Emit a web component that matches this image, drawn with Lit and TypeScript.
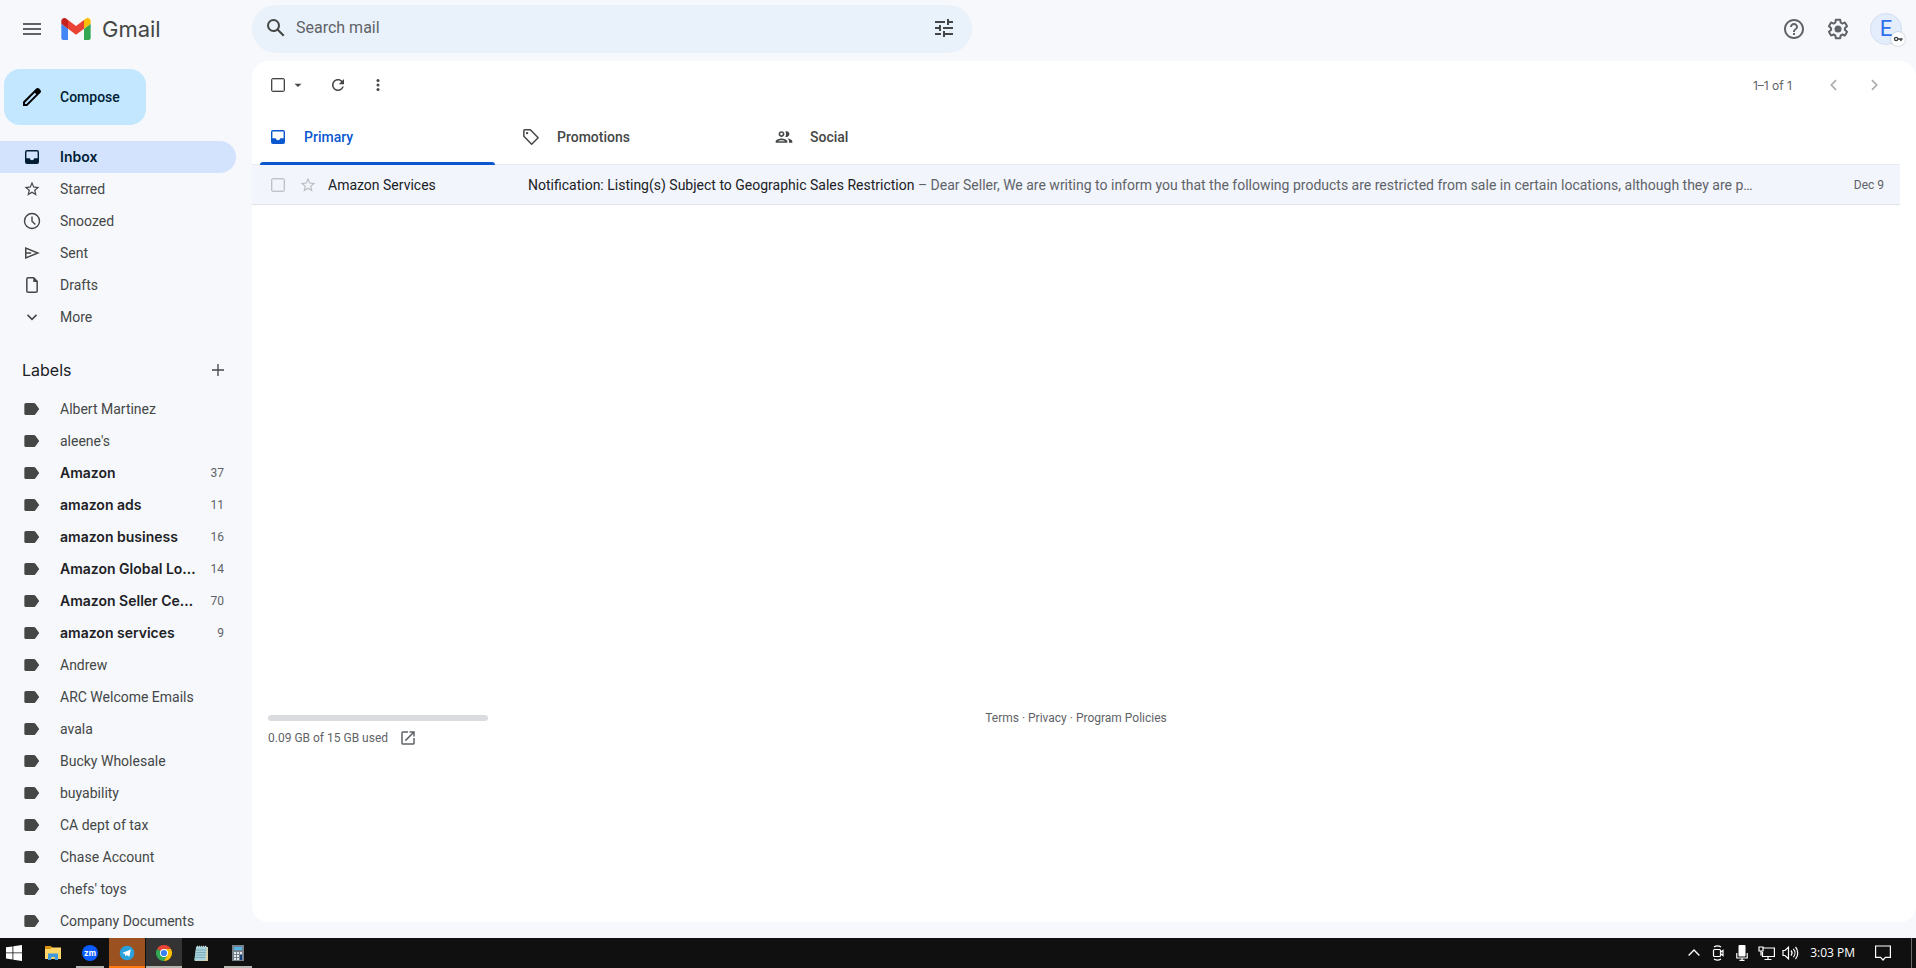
import { LitElement, html, css, svg, nothing } from "lit";
import { customElement, property } from "lit/decorators.js";
import { classMap } from "lit/directives/class-map.js";

const icons = {
  menu: svg`<path d="M3 18h18v-2H3v2zm0-5h18v-2H3v2zm0-7v2h18V6H3z"/>`,
  search: svg`<path d="M20.49 19l-5.73-5.73C15.53 12.2 16 10.91 16 9.5A6.5 6.5 0 1 0 9.5 16c1.41 0 2.7-.47 3.77-1.24L19 20.49 20.49 19zM5 9.5C5 7.01 7.01 5 9.5 5S14 7.01 14 9.5 11.99 14 9.5 14 5 11.99 5 9.5z"/>`,
  tune: svg`<path d="M3 17v2h6v-2H3zM3 5v2h10V5H3zm10 16v-2h8v-2h-8v-2h-2v6h2zM7 9v2H3v2h4v2h2V9H7zm14 4v-2H11v2h10zm-6-4h2V7h4V5h-4V3h-2v6z"/>`,
  help: svg`<path d="M11 18h2v-2h-2v2zm1-16C6.48 2 2 6.48 2 12s4.48 10 10 10 10-4.48 10-10S17.52 2 12 2zm0 18c-4.41 0-8-3.59-8-8s3.59-8 8-8 8 3.59 8 8-3.59 8-8 8zm0-14c-2.21 0-4 1.79-4 4h2c0-1.1.9-2 2-2s2 .9 2 2c0 2-3 1.75-3 5h2c0-2.25 3-2.5 3-5 0-2.21-1.79-4-4-4z"/>`,
  gear: svg`<path d="M13.85 22.25h-3.7c-.74 0-1.36-.54-1.45-1.27l-.27-1.89c-.27-.14-.53-.29-.79-.46l-1.8.72c-.7.26-1.47-.03-1.81-.65L2.2 15.53c-.35-.66-.2-1.44.36-1.88l1.53-1.19c-.01-.15-.02-.3-.02-.46 0-.15.01-.31.02-.46l-1.52-1.19c-.59-.45-.74-1.26-.37-1.88l1.85-3.19c.34-.62 1.11-.9 1.79-.63l1.81.73c.26-.17.52-.32.78-.46l.27-1.91c.09-.7.71-1.25 1.44-1.25h3.7c.74 0 1.36.54 1.45 1.27l.27 1.89c.27.14.53.29.79.46l1.8-.72c.71-.26 1.48.03 1.82.65l1.84 3.18c.36.66.2 1.44-.36 1.88l-1.52 1.19c.01.15.02.3.02.46s-.01.31-.02.46l1.52 1.19c.56.45.72 1.23.37 1.86l-1.86 3.22c-.34.62-1.11.9-1.8.63l-1.8-.72c-.26.17-.52.32-.78.46l-.27 1.91c-.1.68-.72 1.22-1.46 1.22zm-3.23-2h2.76l.37-2.55.53-.22c.44-.18.88-.44 1.34-.78l.45-.34 2.38.96 1.38-2.4-2.03-1.58.07-.56c.03-.26.06-.51.06-.78s-.03-.53-.06-.78l-.07-.56 2.03-1.58-1.39-2.4-2.39.96-.45-.35c-.42-.32-.87-.58-1.33-.77l-.52-.22-.37-2.55h-2.76l-.37 2.55-.53.21c-.44.19-.88.44-1.34.79l-.45.33-2.38-.95-1.39 2.39 2.03 1.58-.07.56a7 7 0 0 0-.06.79c0 .26.02.53.06.78l.07.56-2.03 1.58 1.38 2.4 2.39-.96.45.35c.43.33.86.58 1.33.77l.53.22.38 2.55z"/><circle cx="12" cy="12" r="3.5"/>`,
  pencil: svg`<path d="M20.41 4.94l-1.35-1.35c-.78-.78-2.05-.78-2.83 0L3 16.82V21h4.18L20.41 7.77c.79-.78.79-2.05 0-2.83zM6.41 19.06L5 19v-1.36l9.82-9.82 1.41 1.41-9.82 9.83z"/>`,
  star: svg`<path d="M22 9.24l-7.19-.62L12 2 9.19 8.63 2 9.24l5.46 4.73L5.82 21 12 17.27 18.18 21l-1.63-7.03L22 9.24zM12 15.4l-3.76 2.27 1-4.28-3.32-2.88 4.38-.38L12 6.1l1.71 4.04 4.38.38-3.32 2.88 1 4.28L12 15.4z"/>`,
  inbox: svg`<path fill-rule="evenodd" d="M6 3.6h12a2.4 2.4 0 0 1 2.4 2.4v12a2.4 2.4 0 0 1-2.4 2.4H6A2.4 2.4 0 0 1 3.6 18V6A2.4 2.4 0 0 1 6 3.6zM5.3 5.3v8.2h4c.3 1.5 1.3 2.3 2.7 2.3s2.4-.8 2.7-2.3h4V5.3z"/>`,
  clock: svg`<path fill="none" stroke="currentColor" stroke-width="1.7" d="M21 12a9 9 0 1 1-18 0 9 9 0 0 1 18 0zM12 6.500V12.300l4 3.900"/>`,
  send: svg`<path fill="none" stroke="currentColor" stroke-width="1.800" d="M4.500 6v12l14.500-6zM4.500 12h6.500"/>`,
  draft: svg`<path fill="none" stroke="currentColor" stroke-width="1.800" d="M14 3.300H7.300a1.500 1.500 0 0 0-1.500 1.500v14.400a1.500 1.500 0 0 0 1.500 1.500h9.400a1.500 1.500 0 0 0 1.500-1.500V7.500z"/><path d="M13.500 3v5.500h5.500z"/>`,
  down: svg`<path fill="none" stroke="currentColor" stroke-width="1.900" d="M6.600 9.500l5.400 5.400 5.400-5.400"/>`,
  left: svg`<path fill="none" stroke="currentColor" stroke-width="2" d="M14.500 6.200L8.700 12l5.800 5.800"/>`,
  right: svg`<path fill="none" stroke="currentColor" stroke-width="2" d="M9.500 6.200l5.800 5.800-5.800 5.800"/>`,
  label: svg`<path d="M4.700 4.800h9.300c.9 0 1.600.3 2.100 1l4.600 6.200-4.600 6.200c-.5.700-1.200 1-2.100 1H4.700a1.900 1.900 0 0 1-1.900-1.900V6.700a1.900 1.900 0 0 1 1.900-1.900z"/>`,
  plus: svg`<path d="M11.200 4.800h1.600v6.400h6.400v1.600h-6.400v6.400h-1.600v-6.400H4.800v-1.600h6.400z"/>`,
  caret: svg`<path d="M5 9.500h14L12 16z"/>`,
  refresh: svg`<path d="M17.650 6.350C16.200 4.900 14.210 4 12 4c-4.420 0-7.990 3.580-7.990 8s3.570 8 7.990 8c3.730 0 6.840-2.550 7.730-6h-2.080c-.82 2.330-3.040 4-5.650 4-3.310 0-6-2.690-6-6s2.690-6 6-6c1.660 0 3.140.69 4.220 1.780L13 11h7V4l-2.350 2.350z"/>`,
  dots: svg`<circle cx="12" cy="6.500" r="1.800"/><circle cx="12" cy="12" r="1.800"/><circle cx="12" cy="17.500" r="1.800"/>`,
  tag: svg`<path fill="none" stroke="currentColor" stroke-width="1.800" stroke-linejoin="round" d="M3.400 4.400a1 1 0 0 1 1-1h6.800l9.400 9.400-7.800 7.800-9.400-9.400z"/><circle cx="7.300" cy="7.300" r="1.400"/>`,
  people: svg`<path d="M9 13.750c-2.340 0-7 1.170-7 3.500V19h14v-1.750c0-2.330-4.660-3.500-7-3.500zM4.340 17c.84-.58 2.870-1.250 4.660-1.250s3.820.67 4.660 1.250H4.340zM9 12c1.930 0 3.500-1.570 3.500-3.500S10.930 5 9 5 5.500 6.570 5.500 8.500 7.070 12 9 12zm0-5c.83 0 1.500.67 1.500 1.500S9.830 10 9 10s-1.500-.67-1.500-1.500S8.170 7 9 7zm7.040 6.810c1.160.84 1.960 1.960 1.960 3.440V19h4v-1.750c0-2.020-3.500-3.170-5.960-3.440zM15 12c1.930 0 3.500-1.570 3.500-3.500S16.930 5 15 5c-.54 0-1.040.13-1.500.35.63.89 1 1.980 1 3.150s-.37 2.260-1 3.150c.46.22.96.35 1.500.35z"/>`,
  open: svg`<path d="M19 19H5V5h7V3H5a2 2 0 0 0-2 2v14a2 2 0 0 0 2 2h14c1.100 0 2-.9 2-2v-7h-2v7zM14 3v2h3.590l-9.830 9.830 1.410 1.410L19 6.410V10h2V3h-7z"/>`,
  key: svg`<path fill="none" stroke="currentColor" stroke-width="3.200" d="M11.500 12a4 4 0 1 1-8 0 4 4 0 0 1 8 0zM11.500 12H23M19 12v5.500"/>`,
};
type IconName = keyof typeof icons;

const icon = (name: IconName, size = 20) =>
  html`<svg class="icon" width=${size} height=${size} viewBox="0 0 24 24" fill="currentColor" aria-hidden="true">${icons[name]}</svg>`;

const shared = css`
  :host, * { box-sizing: border-box; }
  button {
    border: 0; padding: 0; margin: 0; background: none; font: inherit; color: inherit; cursor: pointer;
    display: inline-flex; align-items: center; justify-content: center;
  }
  a { color: inherit; text-decoration: none; }
  .icon, svg { display: block; flex: none; }
  .check {
    appearance: none; width: 14px; height: 14px; margin: 0; flex: none; display: block;
    border: 1px solid #444746; border-radius: 2px; background: transparent; box-shadow: inset 0 0 0 1px rgb(68 71 70 / 35%);
  }
`;

@customElement("mail-header")
class MailHeader extends LitElement {
  static styles = [shared, css`
    :host { display: flex; align-items: flex-start; height: 61px; flex: none; color: #444746; }
    .brand { width: 252px; flex: none; height: 58px; display: flex; align-items: center; padding-left: 20px; gap: 17px; color: #5f6368; }
    .logo { display: flex; align-items: center; gap: 11px; font-family: "Inter", sans-serif; font-size: 22px; line-height: 28px; color: #444746; }
    .search { display: flex; align-items: center; flex: 0 1 720px; height: 48px; margin-top: 5px; padding: 0 16px 2px 12px; gap: 8px; border-radius: 24px; background: #e9f1fb; }
    .search input { flex: 1; min-width: 0; border: 0; outline: 0; background: none; font: inherit; font-size: 16px; line-height: 20px; padding: 0; color: #444746; }
    .search input::placeholder { color: #5f6368; opacity: 1; }
    .tools { display: flex; align-items: center; height: 58px; margin-left: auto; padding-right: 14px; gap: 20px; color: #5f6368; }
    .avatar { position: relative; width: 32px; height: 32px; border-radius: 50%; background: #e4edfc; border: 1px solid #d3dff2; color: #2f6fed; font-size: 22px; line-height: 30px; }
    .badge { position: absolute; right: -4px; bottom: -2px; width: 14px; height: 14px; border-radius: 50%; background: #fff; color: #3c4043; display: flex; align-items: center; justify-content: center; box-shadow: 0 0 2px rgb(60 64 67 / 40%); }
  `];
  render() {
    return html`
      <div class="brand">
        <button aria-label="Main menu">${icon("menu", 24)}</button>
        <a class="logo" href="#inbox">
          <svg width="30" height="22" viewBox="52 42 88 66" aria-hidden="true">
            <path fill="#4285f4" d="M58 108h14V74L52 59v43c0 3.320 2.690 6 6 6"/>
            <path fill="#34a853" d="M120 108h14c3.320 0 6-2.690 6-6V59l-20 15"/>
            <path fill="#fbbc04" d="M120 48v26l20-15v-8c0-7.420-8.470-11.650-14.400-7.200"/>
            <path fill="#ea4335" d="M72 74V48l24 18 24-18v26L96 92"/>
            <path fill="#c5221f" d="M52 51v8l20 15V48l-5.600-4.200c-5.940-4.450-14.400-.22-14.400 7.200"/>
          </svg>
          <span>Gmail</span>
        </a>
      </div>
      <form class="search" role="search">
        <button type="button" aria-label="Search">${icon("search", 24)}</button>
        <input type="text" aria-label="Search mail" placeholder="Search mail" />
        <button type="button" aria-label="Show search options">${icon("tune", 24)}</button>
      </form>
      <div class="tools">
        <button aria-label="Support">${icon("help", 24)}</button>
        <button aria-label="Settings">${icon("gear", 24)}</button>
        <button class="avatar" aria-label="Account">E<span class="badge">${icon("key", 10)}</span></button>
      </div>`;
  }
}

interface NavEntry { text: string; icon: IconName; size?: number; active?: boolean; count?: number; }

const folders: NavEntry[] = [
  { text: "Inbox", icon: "inbox", active: true },
  { text: "Starred", icon: "star", size: 18 },
  { text: "Snoozed", icon: "clock" },
  { text: "Sent", icon: "send" },
  { text: "Drafts", icon: "draft" },
  { text: "More", icon: "down" },
];

const labels: [string, number?][] = [
  ["Albert Martinez"], ["aleene's"], ["Amazon", 37], ["amazon ads", 11], ["amazon business", 16],
  ["Amazon Global Lo…", 14], ["Amazon Seller Ce…", 70], ["amazon services", 9], ["Andrew"],
  ["ARC Welcome Emails"], ["avala"], ["Bucky Wholesale"], ["buyability"], ["CA dept of tax"],
  ["Chase Account"], ["chefs' toys"], ["Company Documents"],
];

@customElement("mail-sidebar")
class MailSidebar extends LitElement {
  static styles = [shared, css`
    :host { display: flex; flex-direction: column; width: 252px; flex: none; overflow: hidden; padding-right: 16px; color: #444746; font-size: 14px; line-height: 20px; }
    .compose { flex: none; align-self: flex-start; justify-content: flex-start; margin: 8px 0 16px 4px; height: 56px; min-width: 142px; padding: 0 16px; gap: 16px; border-radius: 16px; background: #c2e7ff; color: #001d35; font-weight: 500; }
    .compose .icon { color: #000; }
    ul { list-style: none; margin: 0; padding: 0; }
    .entry { display: flex; align-items: center; height: 32px; padding: 0 12px 0 22px; border-radius: 0 16px 16px 0; }
    .glyph { width: 20px; margin-right: 18px; display: flex; justify-content: center; flex: none; }
    .name { flex: 1; min-width: 0; white-space: nowrap; }
    .count { font-size: 12px; font-weight: 400; color: #5f6368; }
    .active { background: #d3e3fd; color: #001d35; }
    .active .name, .unread .name { font-family: "Inter", sans-serif; font-weight: 600; }
    .unread { color: #202124; }
    .unread .glyph { color: #444746; }
    .heading { display: flex; align-items: center; justify-content: space-between; height: 60px; flex: none; padding: 14px 8px 0 22px; }
    h2 { margin: 0; font-family: "Inter", sans-serif; font-size: 16px; font-weight: 400; line-height: 20px; color: #202124; }
  `];
  private entry(e: NavEntry) {
    const bold = e.count !== undefined;
    return html`<li><a href="#" class=${classMap({ entry: true, active: !!e.active, unread: bold })}>
      <span class="glyph">${icon(e.icon, e.size ?? 20)}</span>
      <span class="name">${e.text}</span>
      ${bold ? html`<span class="count">${e.count}</span>` : nothing}
    </a></li>`;
  }
  render() {
    return html`
      <button class="compose">${icon("pencil", 24)}<span>Compose</span></button>
      <nav aria-label="Folders"><ul>${folders.map((f) => this.entry(f))}</ul></nav>
      <div class="heading"><h2>Labels</h2><button aria-label="Create new label">${icon("plus")}</button></div>
      <nav aria-label="Labels"><ul>${labels.map(([text, count]) => this.entry({ text, count, icon: "label" }))}</ul></nav>`;
  }
}

@customElement("mail-list")
class MailList extends LitElement {
  @property({ type: Number }) used = 0;
  static styles = [shared, css`
    :host { display: flex; flex-direction: column; flex: 1; min-width: 0; margin-bottom: 16px; border-radius: 16px; background: #fff; overflow: hidden; color: #444746; font-size: 14px; line-height: 20px; }
    .toolbar { display: flex; align-items: center; height: 48px; padding: 0 22px 0 19px; }
    .caret { width: 26px; height: 20px; }
    .toolbar .round { width: 40px; height: 32px; }
    .refresh { margin-left: 7px; }
    .range { margin-left: auto; margin-right: 22px; padding-top: 2px; font-family: "Inter", sans-serif; font-size: 12px; color: #5f6368; }
    .pager { color: #a9abad; }
    .tabs { display: flex; height: 55px; }
    .tab { position: relative; flex: 0 1 253px; justify-content: flex-start; padding-left: 16px; gap: 16px; font-weight: 500; }
    .current { color: #0b57d0; }
    .current::after { content: ""; position: absolute; left: 8px; right: 10px; bottom: -1px; height: 3px; border-radius: 3px 3px 0 0; background: #0b57d0; }
    .scroll { padding-right: 16px; }
    table { width: 100%; table-layout: fixed; border-collapse: collapse; background: #f2f5fc; }
    tr { height: 40px; border-top: 1px solid #e8ebef; border-bottom: 1px solid #dfe3ea; }
    td { padding: 0; white-space: nowrap; overflow: hidden; }
    .pick { width: 76px; }
    .pickers { display: flex; align-items: center; padding-left: 19px; gap: 14px; color: #bdbfc3; }
    .pickers .check { border-color: #bfc2c6; box-shadow: inset 0 0 0 1px rgb(190 193 198 / 35%); }
    .from { width: 200px; color: #202124; }
    .subject { color: #202124; text-overflow: ellipsis; }
    .snippet { color: #5f6368; }
    .date { width: 100px; padding-right: 16px; text-align: right; font-size: 12px; color: #5f6368; }
    footer { display: grid; grid-template-columns: 1fr auto 1fr; align-items: start; margin-top: 510px; padding: 0 16px; font-size: 12px; line-height: 16px; color: #5f6368; }
    .storage { width: 220px; display: flex; flex-direction: column; gap: 8px; }
    .meter { height: 6px; border-radius: 3px; background: #dadce0; overflow: hidden; }
    .quota { display: flex; align-items: center; gap: 11px; }
    .links { margin-top: -5px; }
  `];
  render() {
    return html`
      <div class="toolbar">
        <input class="check" type="checkbox" aria-label="Select all" />
        <button class="caret" aria-label="Select">${icon("caret", 12)}</button>
        <button class="round refresh" aria-label="Refresh">${icon("refresh", 18)}</button>
        <button class="round" aria-label="More">${icon("dots")}</button>
        <span class="range">1–1 of 1</span>
        <button class="round pager" aria-label="Newer">${icon("left")}</button>
        <button class="round pager" aria-label="Older">${icon("right")}</button>
      </div>
      <div class="tabs" role="tablist">
        <button class="tab current" role="tab" aria-selected="true">${icon("inbox")}<span>Primary</span></button>
        <button class="tab" role="tab">${icon("tag")}<span>Promotions</span></button>
        <button class="tab" role="tab">${icon("people")}<span>Social</span></button>
      </div>
      <div class="scroll">
        <table>
          <tbody>
            <tr>
              <td class="pick"><div class="pickers">
                <input class="check" type="checkbox" aria-label="Select conversation" />
                <button aria-label="Star">${icon("star", 18)}</button>
              </div></td>
              <td class="from">Amazon Services</td>
              <td class="subject">Notification: Listing(s) Subject to Geographic Sales Restriction <span class="snippet">– Dear Seller, We are writing to inform you that the following products are restricted from sale in certain locations, although they are p…</span></td>
              <td class="date">Dec 9</td>
            </tr>
          </tbody>
        </table>
        <footer>
          <div class="storage">
            <div class="meter"></div>
            <div class="quota"><span>${this.used} GB of 15 GB used</span><a href="#storage" aria-label="Manage storage">${icon("open", 18)}</a></div>
          </div>
          <div class="links"><a href="#terms">Terms</a> · <a href="#privacy">Privacy</a> · <a href="#policies">Program Policies</a></div>
        </footer>
      </div>`;
  }
}

@customElement("task-bar")
class TaskBar extends LitElement {
  static styles = [shared, css`
    :host { display: flex; align-items: stretch; height: 30px; flex: none; background: #101010; color: #fff; font-family: "Open Sans", "Noto Sans", sans-serif; font-size: 12px; line-height: 16px; }
    .apps { display: flex; gap: 1px; }
    .app { position: relative; width: 36px; }
    .start { width: 34px; justify-content: flex-start; padding-left: 6px; }
    .running::after { content: ""; position: absolute; left: 4px; right: 4px; bottom: 0; height: 2px; background: #b4b4ae; }
    .alert { background: #9b5220; }
    .alert::after { left: 0; right: 0; background: #ff7a0d; }
    .focused { background: #343434; }
    .focused::after { left: 0; right: 0; }
    .tray { display: flex; align-items: center; margin-left: auto; }
    .tray button { width: 24px; height: 30px; }
    .clock { padding: 0 7px 0 8px; }
    .tray .notes { width: 42px; }
    .tray .desktop { width: 5px; margin-left: 7px; border-left: 1px solid #6a6a6a; }
  `];
  render() {
    return html`
      <div class="apps">
        <button class="app start" aria-label="Start"><svg width="16" height="16" viewBox="0 0 16 16" fill="#fff"><path d="M0 2.300l6.500-.9v6.100H0zM7.300 1.300L16 0v7.500H7.300zM0 8.300h6.500v6.200L0 13.600zM7.300 8.300H16V16l-8.700-1.300z"/></svg></button>
        <button class="app" aria-label="File Explorer"><svg width="18" height="16" viewBox="0 0 18 16"><path fill="#d9930f" d="M1 1h6l1.500 2H17v4H1z"/><path fill="#ffd667" d="M1 4h5l2-1.500h9V14H1z"/><path fill="#3f97dd" d="M4 15V8.500h10V15h-3.200v-3H7.200v3z"/></svg></button>
        <button class="app running" aria-label="Zoom"><svg width="16" height="16" viewBox="0 0 16 16"><circle cx="8" cy="8" r="8" fill="#0b5cff"/><text x="8" y="10.500" font-family="Inter, sans-serif" font-size="8" font-weight="700" text-anchor="middle" fill="#fff">zm</text></svg></button>
        <button class="app running alert" aria-label="Telegram"><svg width="16" height="16" viewBox="0 0 16 16"><circle cx="8" cy="8" r="7.300" fill="#2aa1da"/><path fill="#fff" d="M3.200 8l8.600-3.400-1.500 7.200-2.700-1.900-1.400 1.300-.3-2.200z"/></svg></button>
        <button class="app running focused" aria-label="Chrome"><svg width="16" height="16" viewBox="0 0 16 16"><path fill="#e94335" d="M8 8L1.070 4A8 8 0 0 1 14.930 4z"/><path fill="#fbbd05" d="M8 8V4h6.930A8 8 0 0 1 8 16z"/><path fill="#34a754" d="M8 8l3.460 2L8 16A8 8 0 0 1 1.070 4z"/><circle cx="8" cy="8" r="4" fill="#fff"/><circle cx="8" cy="8" r="3.100" fill="#3a7ff0"/></svg></button>
        <button class="app" aria-label="Notepad"><svg width="16" height="17" viewBox="0 0 16 17"><path fill="#d9d0a5" d="M3 2h12v14H2z"/><path fill="#a6d3dc" d="M3.300 1.500H14L12.500 15.500H1.200z"/><path stroke="#6a9aa6" stroke-width=".7" d="M3 5h10M2.800 7.500h10M2.500 10h10M2.200 12.500h10"/><path stroke="#f2f2f2" stroke-width="1" stroke-dasharray="1 1" d="M4 1.300h10"/></svg></button>
        <button class="app running" aria-label="Calculator"><svg width="12" height="16" viewBox="0 0 12 16"><path fill="#78828b" d="M0 0h12v16H0z"/><path fill="#59b4e6" d="M2 2h8v3H2z"/><path fill="#e6eaee" d="M2 7h2v2H2zM5 7h2v2H5zM8 7h2v2H8zM2 10h2v2H2zM5 10h2v2H5zM2 13h2v2H2zM5 13h2v2H5z"/><path fill="#123f7a" d="M8 10h2v5H8z"/></svg></button>
      </div>
      <div class="tray">
        <button aria-label="Show hidden icons"><svg width="12" height="12" viewBox="0 0 12 12" fill="none" stroke="#fff" stroke-width="1.300"><path d="M.6 8.500L6 3l5.400 5.500"/></svg></button>
        <button aria-label="Meet now"><svg width="14" height="16" viewBox="0 0 14 16" fill="none" stroke="#fff" stroke-width="1.200"><rect x="2.500" y="4.500" width="7" height="7" rx="1"/><path d="M9.500 7.200l2.500-1.700v5L9.500 8.800M3 2C5 .6 8 .6 10 2M3 14c2 1.400 5 1.400 7 0"/></svg></button>
        <button aria-label="Microphone"><svg width="12" height="16" viewBox="0 0 12 16"><rect x="2.500" y="0" width="7" height="11.500" rx="1" fill="#fff"/><path fill="none" stroke="#fff" stroke-width="1.200" d="M.8 8v5h10.400V8M6 13v2.500M3.500 15.400h5"/></svg></button>
        <button aria-label="Network"><svg width="17" height="16" viewBox="0 0 17 16" fill="none" stroke="#fff" stroke-width="1.200"><path d="M5.500 3h10.900v8.500H4.500V7M1 2h4v4H1zM3 6v4.500M10 11.500v3M6.500 14.500h7"/></svg></button>
        <button aria-label="Volume"><svg width="17" height="16" viewBox="0 0 17 16" fill="none" stroke="#fff" stroke-width="1.200"><path d="M1 5.500h2l3.500-3.300v11.600L3 10.500H1zM9 5.500c1.300 1.500 1.300 3.500 0 5M11.300 3.800c2.200 2.400 2.200 6 0 8.400M13.500 2c3 3.400 3 8.600 0 12"/></svg></button>
        <span class="clock">3:03 PM</span>
        <button class="notes" aria-label="Notifications"><svg width="16" height="16" viewBox="0 0 16 16" fill="none" stroke="#fff" stroke-width="1.200"><path d="M.6 1h14.800v11.400h-5L8 15l-2.400-2.600h-5z"/></svg></button>
        <button class="desktop" aria-label="Show desktop"></button>
      </div>`;
  }
}

@customElement("app-root")
class AppRoot extends LitElement {
  static styles = css`
    :host { display: flex; flex-direction: column; height: 100vh; overflow: hidden; background: #f6f8fc; font-family: "Roboto", sans-serif; }
    main { display: flex; flex: 1; min-height: 0; }
  `;
  render() {
    return html`
      <mail-header></mail-header>
      <main>
        <mail-sidebar></mail-sidebar>
        <mail-list .used=${0.09}></mail-list>
      </main>
      <task-bar></task-bar>`;
  }
}
